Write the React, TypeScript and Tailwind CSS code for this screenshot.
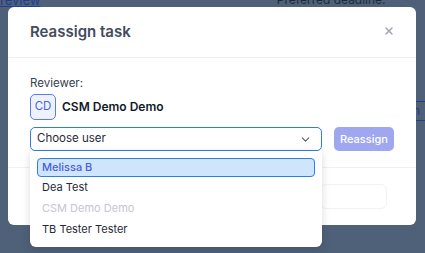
import { ChevronDown, X } from 'lucide-react';

const users = [
  { name: 'Melissa B', active: true },
  { name: 'Dea Test' },
  { name: 'CSM Demo Demo', disabled: true },
  { name: 'TB Tester Tester' },
];

export default function App() {
  return (
    <div
      className="relative h-[253px] w-[425px] overflow-hidden bg-[#4f6079]"
      style={{ fontFamily: 'Inter, "Noto Sans", sans-serif' }}
    >
      {/* page behind the overlay */}
      <div className="-mt-[9px] flex items-start justify-between text-[13px]">
        <span className="text-[#1d3f8f] underline">review</span>
        <span className="mr-[16px] text-[12px] text-[#1e2a3a]">
          Preferred deadline:<span className="ml-[18px]">˅</span>
        </span>
      </div>
      <div className="mt-[90px] ml-auto w-[12px] border-y border-[#1d3f8f] text-[12px] leading-[18px] text-[#1d3f8f]">
        n
      </div>

      {/* modal */}
      <div className="absolute left-[8px] top-[7px] h-[218px] w-[408px] rounded-md bg-white">
        <div className="flex h-[51px] items-center justify-between border-b border-[#eef0f3] pl-[22px] pr-[21px]">
          <h2 className="text-[15px] font-semibold text-[#434b5d]">Reassign task</h2>
          <X size={12} strokeWidth={3} className="mb-[3px] text-[#a0a6b1]" />
        </div>
        <div className="border-b border-[#eef0f3] px-[22px] pb-[16px] pt-[18px]">
          <p className="text-[11.5px] leading-[14px] text-[#374151]">Reviewer:</p>
          <div className="mt-[4px] flex items-center gap-[6px]">
            <div className="flex h-[26px] w-[26px] items-center justify-center rounded-[5px] border border-[#5b7bf0] bg-[#eef2ff] text-[11.5px] text-[#4a64e0]">
              CD
            </div>
            <span className="text-[12px] font-semibold text-[#111827]">CSM Demo Demo</span>
          </div>
          <div className="mt-[7px] flex items-center gap-[12px]">
            <div className="flex h-[24px] w-[292px] items-center justify-between rounded-[5px] border border-[#2f7fe0] pl-[6px] pr-[9px] text-[11.5px] text-[#1f2937]">
              <span>Choose user</span>
              <ChevronDown size={13} className="text-[#555d6b]" />
            </div>
            <button className="h-[24px] w-[60px] rounded-[5px] bg-[#9ea7ef] text-[11px] font-medium text-white">
              Reassign
            </button>
          </div>
        </div>
        <div className="flex justify-end pr-[29px] pt-[16px]">
          <div className="h-[25px] w-[67px] rounded-md border border-[#f1f2f4]" />
        </div>
      </div>

      {/* dropdown */}
      <div className="absolute left-[30px] top-[151px] w-[292px] rounded-b-md bg-white px-[7px] pb-[7px] pt-[7px] shadow-[0_2px_8px_rgba(0,0,0,0.15)]">
        {users.map((u) =>
          u.active ? (
            <div
              key={u.name}
              className="flex h-[19px] items-center rounded-[4px] border border-[#2f7fe0] bg-[#cfe5fb] px-[4px] text-[11px] font-medium text-[#4b5ce0]"
            >
              {u.name}
            </div>
          ) : (
            <div
              key={u.name}
              className={`flex h-[21px] items-center px-[5px] text-[11px] ${u.disabled ? 'text-[#c4c6cf]' : 'text-[#1f2937]'}`}
            >
              {u.name}
            </div>
          )
        )}
      </div>
    </div>
  );
}
